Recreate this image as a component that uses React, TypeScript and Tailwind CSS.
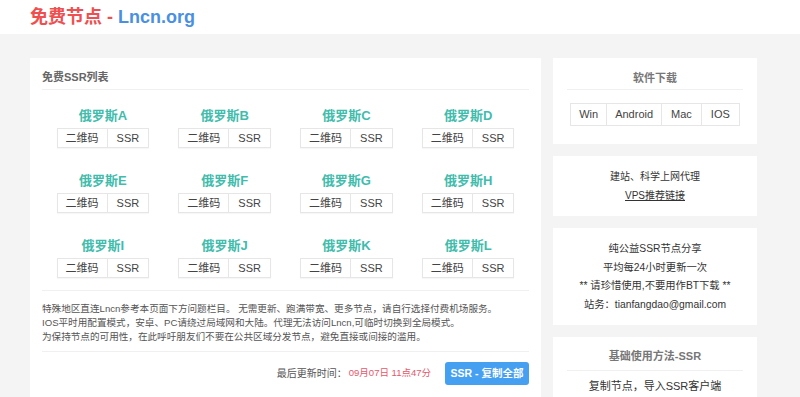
const nodes = ["A", "B", "C", "D", "E", "F", "G", "H", "I", "J", "K", "L"];

const font = { fontFamily: '"Liberation Sans", "Noto Sans CJK SC", sans-serif' };

const NodeItem = ({ name }: { name: string }) => (
  <div className="flex h-[65px] flex-col items-center pt-[17px]">
    <div className="text-[13px] font-bold leading-[18px] text-[#3fbcac]">俄罗斯{name}</div>
    <div className="mt-[3px] flex h-[20px] border border-[#e6e6e6] text-[11px] text-[#444] shadow-[0_1px_1px_rgba(0,0,0,0.03)]">
      <span className="flex items-center px-[8px]">二维码</span>
      <span className="flex items-center border-l border-[#e6e6e6] px-[9px]">SSR</span>
    </div>
  </div>
);

export default function App() {
  return (
    <div style={font} className="min-h-[397px] bg-[#f4f4f4]">
      <header className="flex h-[34px] items-center bg-white px-[30px] text-[18px] font-bold">
        <span className="text-[#ef4f4f]">免费节点 - </span>
        <span className="ml-[5px] text-[#4a90e2]">Lncn.org</span>
      </header>

      <main className="flex gap-[12px] px-[30px] pt-[24px]">
        <section className="w-[511px] bg-white px-[12px]">
          <div className="border-b border-[#f0f0f0] pb-[3px] pt-[10px] text-[11px] font-bold leading-[18px] text-[#666]">
            免费SSR列表
          </div>
          <div className="grid grid-cols-4 pb-[5px]">
            {nodes.map((n) => (
              <NodeItem key={n} name={n} />
            ))}
          </div>
          <div className="border-y border-[#f0f0f0] pb-[7px] pt-[11px] text-[9.6px] leading-[14px] text-[#555]">
            <p>特殊地区直连Lncn参考本页面下方问题栏目。 无需更新、跑满带宽、更多节点，请自行选择付费机场服务。</p>
            <p>IOS平时用配置模式，安卓、PC请绕过局域网和大陆。代理无法访问Lncn,可临时切换到全局模式。</p>
            <p>为保持节点的可用性，在此呼吁朋友们不要在公共区域分发节点，避免直接或间接的滥用。</p>
          </div>
          <div className="flex items-center justify-end pb-[20px] pt-[10px]">
            <span className="text-[10px] text-[#555]">最后更新时间：</span>
            <span className="ml-[2px] text-[9.5px] text-[#e5566a]">09月07日 11点47分</span>
            <button className="ml-[14px] h-[23px] w-[84px] rounded-[3px] bg-[#46a0f2] text-[10.5px] font-bold text-white">
              SSR - 复制全部
            </button>
          </div>
        </section>

        <aside className="flex w-[204px] flex-col gap-[12px]">
          <div className="h-[86px] bg-white">
            <div className="mx-[14px] border-b border-[#f0f0f0] pb-[2px] pt-[11px] text-center text-[11px] font-bold leading-[18px] text-[#777]">
              软件下载
            </div>
            <div className="mt-[13px] flex justify-center">
              <div className="flex h-[23px] border border-[#e6e6e6] text-[11px] text-[#444]">
                <span className="flex items-center px-[8px]">Win</span>
                <span className="flex items-center border-l border-[#e6e6e6] px-[8px]">Android</span>
                <span className="flex items-center border-l border-[#e6e6e6] px-[9px]">Mac</span>
                <span className="flex items-center border-l border-[#e6e6e6] px-[9px]">IOS</span>
              </div>
            </div>
          </div>

          <div className="bg-white py-[11px] text-center text-[10px] leading-[19px] text-[#333]">
            <p>建站、科学上网代理</p>
            <p className="underline">VPS推荐链接</p>
          </div>

          <div className="bg-white pb-[11px] pt-[12px] text-center text-[10.3px] leading-[18.5px] text-[#333]">
            <p>纯公益SSR节点分享</p>
            <p>平均每24小时更新一次</p>
            <p>** 请珍惜使用,不要用作BT下载 **</p>
            <p>站务：tianfangdao@gmail.com</p>
          </div>

          <div className="bg-white pb-[20px]">
            <div className="mx-[14px] border-b border-[#f0f0f0] pb-[5px] pt-[10px] text-center text-[11px] font-bold leading-[18px] text-[#777]">
              基础使用方法-SSR
            </div>
            <p className="mt-[6px] text-center text-[11px] leading-[18px] text-[#333]">复制节点，导入SSR客户端</p>
          </div>
        </aside>
      </main>
    </div>
  );
}
